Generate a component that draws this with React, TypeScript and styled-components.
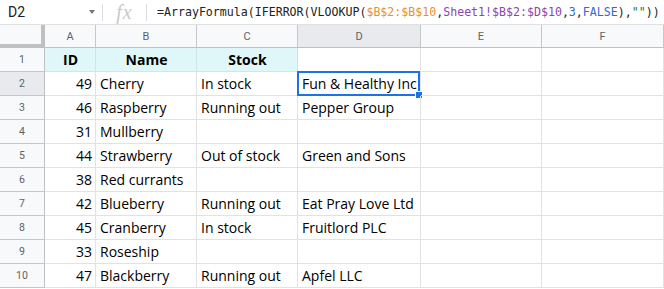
import React from "react";
import styled, { createGlobalStyle, css } from "styled-components";

const Global = createGlobalStyle`
  html, body { margin: 0; padding: 0; background: #fff; }
  body { width: 664px; height: 289px; overflow: hidden; }
`;

const Page = styled.div`
  width: 664px;
  height: 289px;
  overflow: hidden;
  background: #fff;
  font-family: Roboto, "Liberation Sans", sans-serif;
`;

const FormulaBar = styled.div`
  display: flex;
  align-items: center;
  height: 24px;
  border-bottom: 1px solid #e0e0e0;
  background: #fff;
`;

const NameBox = styled.div`
  display: flex;
  align-items: center;
  justify-content: space-between;
  width: 102px;
  padding-left: 8px;
  padding-right: 7px;
  box-sizing: border-box;
  font-size: 14px;
  color: #202124;
`;

const Caret = styled.span`
  width: 0;
  height: 0;
  border-left: 3.5px solid transparent;
  border-right: 3.5px solid transparent;
  border-top: 4px solid #757575;
`;

const Divider = styled.div`
  width: 1px;
  height: 17px;
  background: #dadce0;
`;

const FxIcon = styled.span`
  width: 43px;
  text-align: center;
  font-family: "Liberation Serif", serif;
  font-style: italic;
  font-size: 20px;
  color: #c8c8c8;
  letter-spacing: 1px;
`;

const Formula = styled.div`
  padding-left: 10px;
  font-family: "DejaVu Sans Mono", monospace;
  font-size: 11.6px;
  color: #222;
  white-space: nowrap;
`;

const Tok = styled.span<{ $c: string }>`
  color: ${(p) => p.$c};
`;

const Grid = styled.div`
  display: grid;
  grid-template-columns: 45px 51px 101px 101px 123px 121px 122px;
  grid-template-rows: 23px repeat(10, 24px);
`;

const Corner = styled.div`
  background: #f8f9fa;
  border-right: 4px solid #c0c0c0;
  border-bottom: 4px solid #c0c0c0;
  box-sizing: border-box;
`;

const ColHead = styled.div<{ $active?: boolean }>`
  display: flex;
  align-items: center;
  justify-content: center;
  box-sizing: border-box;
  border-right: 1px solid #c7c7c7;
  border-bottom: 1px solid #c0c0c0;
  background: ${(p) => (p.$active ? "#e8eaed" : "#f8f9fa")};
  color: #5f6368;
  font-size: 11px;
  padding-top: 1px;
`;

const RowHead = styled.div<{ $active?: boolean }>`
  display: flex;
  align-items: center;
  justify-content: center;
  box-sizing: border-box;
  border-right: 1px solid #c0c0c0;
  border-bottom: 1px solid #c7c7c7;
  background: ${(p) => (p.$active ? "#e8eaed" : "#f8f9fa")};
  color: #5f6368;
  font-size: 10.5px;
`;

const Cell = styled.div<{ $head?: boolean; $num?: boolean }>`
  position: relative;
  display: flex;
  align-items: flex-end;
  box-sizing: border-box;
  border-right: 1px solid #e2e2e2;
  border-bottom: 1px solid #e2e2e2;
  padding: 0 3px 2px 4px;
  font-family: "Open Sans", "Noto Sans", sans-serif;
  font-size: 14px;
  line-height: 19px;
  color: #000;
  white-space: nowrap;
  justify-content: ${(p) => (p.$num ? "flex-end" : "flex-start")};
  ${(p) =>
    p.$head &&
    css`
      background: #e0f7fa;
      font-weight: 700;
      justify-content: center;
      border-right-color: #cfe6e9;
      border-bottom-color: #d6e4e6;
    `}
`;

const Selection = styled.div`
  position: absolute;
  left: -1px;
  top: -1px;
  right: 0;
  bottom: -1px;
  border: 2px solid #1a73e8;
  pointer-events: none;
`;

const Handle = styled.div`
  position: absolute;
  right: -5px;
  bottom: -5px;
  width: 6px;
  height: 6px;
  background: #1a73e8;
  border: 1px solid #fff;
`;

type Row = { id: string; name: string; stock: string; d: string };

const rows: Row[] = [
  { id: "ID", name: "Name", stock: "Stock", d: "" },
  { id: "49", name: "Cherry", stock: "In stock", d: "Fun & Healthy Inc" },
  { id: "46", name: "Raspberry", stock: "Running out", d: "Pepper Group" },
  { id: "31", name: "Mullberry", stock: "", d: "" },
  { id: "44", name: "Strawberry", stock: "Out of stock", d: "Green and Sons" },
  { id: "38", name: "Red currants", stock: "", d: "" },
  { id: "42", name: "Blueberry", stock: "Running out", d: "Eat Pray Love Ltd" },
  { id: "45", name: "Cranberry", stock: "In stock", d: "Fruitlord PLC" },
  { id: "33", name: "Roseship", stock: "", d: "" },
  { id: "47", name: "Blackberry", stock: "Running out", d: "Apfel LLC" },
];

const cols = ["A", "B", "C", "D", "E", "F"];

export default function App() {
  return (
    <Page>
      <Global />
      <FormulaBar>
        <NameBox>
          D2
          <Caret />
        </NameBox>
        <Divider />
        <FxIcon>fx</FxIcon>
        <Divider />
        <Formula>
          =ArrayFormula(IFERROR(VLOOKUP(
          <Tok $c="#e8912d">$B$2:$B$10</Tok>,
          <Tok $c="#8e44ad">Sheet1!$B$2:$D$10</Tok>,
          <Tok $c="#3367d6">3</Tok>,<Tok $c="#3367d6">FALSE</Tok>),
          <Tok $c="#0b8043">""</Tok>))
        </Formula>
      </FormulaBar>
      <Grid>
        <Corner />
        {cols.map((c) => (
          <ColHead key={c} $active={c === "D"}>
            {c}
          </ColHead>
        ))}
        {rows.map((r, i) => {
          const head = i === 0;
          return (
            <React.Fragment key={i}>
              <RowHead $active={i === 1}>{i + 1}</RowHead>
              <Cell $head={head} $num={!head}>
                {r.id}
              </Cell>
              <Cell $head={head}>{r.name}</Cell>
              <Cell $head={head}>{r.stock}</Cell>
              <Cell>
                {r.d}
                {i === 1 && (
                  <Selection>
                    <Handle />
                  </Selection>
                )}
              </Cell>
              <Cell />
              <Cell />
            </React.Fragment>
          );
        })}
      </Grid>
    </Page>
  );
}
